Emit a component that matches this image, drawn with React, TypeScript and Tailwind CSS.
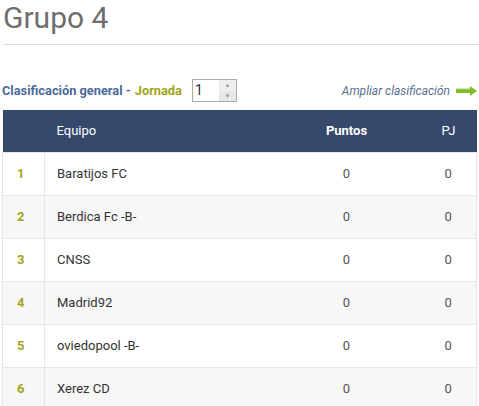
const rows = [
  { pos: 1, team: 'Baratijos FC', pts: 0, pj: 0 },
  { pos: 2, team: 'Berdica Fc -B-', pts: 0, pj: 0 },
  { pos: 3, team: 'CNSS', pts: 0, pj: 0 },
  { pos: 4, team: 'Madrid92', pts: 0, pj: 0 },
  { pos: 5, team: 'oviedopool -B-', pts: 0, pj: 0 },
  { pos: 6, team: 'Xerez CD', pts: 0, pj: 0 },
]

function Arrow() {
  return (
    <svg width="22" height="10" viewBox="0 0 22 10">
      <path d="M0 3 H14 V0 L21 5 L14 10 V7 H0 Z" fill="#7cbf2a" />
      <path d="M0 3 H14 V1" stroke="#a3d85a" strokeWidth="1" fill="none" />
    </svg>
  )
}

export default function App() {
  return (
    <div className="w-[479px] h-[406px] overflow-hidden bg-white font-['Roboto',sans-serif]">
      <div className="pl-[3px]">
        <h1 className="text-[30px] leading-[34px] text-[#6e6e6e] pt-[1px]">Grupo 4</h1>
        <div className="mt-[9px] h-px bg-[#ddd]" />
      </div>
      <div className="mt-[34px] flex items-center justify-between pl-[2px] pr-[1px]">
        <div className="flex items-center text-[12.8px] font-bold">
          <span className="text-[#4a6b9b]">Clasificación general - </span>
          <span className="ml-1 text-[#a0a61c]">Jornada</span>
          <div className="ml-[10px] flex h-[23px] w-[45px] border border-[#aaa] bg-white">
            <span className="flex-1 pl-[2px] text-[14px] font-normal leading-[21px] text-[#333]">1</span>
            <div className="flex w-[17px] flex-col">
              <span className="flex-1 bg-[#eee] text-center text-[6px] leading-[10px] text-[#999]">▲</span>
              <span className="flex-1 bg-[#e8e8e8] text-center text-[6px] leading-[10px] text-[#999]">▼</span>
            </div>
          </div>
        </div>
        <div className="flex items-center gap-[6px]">
          <span className="text-[12px] italic text-[#5a6f90]">Ampliar clasificación</span>
          <Arrow />
        </div>
      </div>
      <table className="mt-[8px] ml-[2px] w-[475px] border-collapse text-[13px]">
        <thead>
          <tr className="h-[42px] bg-[#35496d] text-white">
            <th className="w-[42px]" />
            <th className="pl-[12px] text-left font-normal">Equipo</th>
            <th className="w-[148px] text-center font-bold">Puntos</th>
            <th className="w-[56px] text-center font-normal">PJ</th>
          </tr>
        </thead>
        <tbody>
          {rows.map((r, i) => (
            <tr key={r.pos} className={`h-[43px] border border-[#e6e6e6] ${i % 2 ? 'bg-[#f7f7f7]' : 'bg-white'}`}>
              <td className="border-r border-[#e6e6e6] pl-[14px] text-left font-bold text-[#a0a61c]">{r.pos}</td>
              <td className="pl-[12px] text-[#333]">{r.team}</td>
              <td className="text-center text-[#555]">{r.pts}</td>
              <td className="text-center text-[#555]">{r.pj}</td>
            </tr>
          ))}
        </tbody>
      </table>
    </div>
  )
}
